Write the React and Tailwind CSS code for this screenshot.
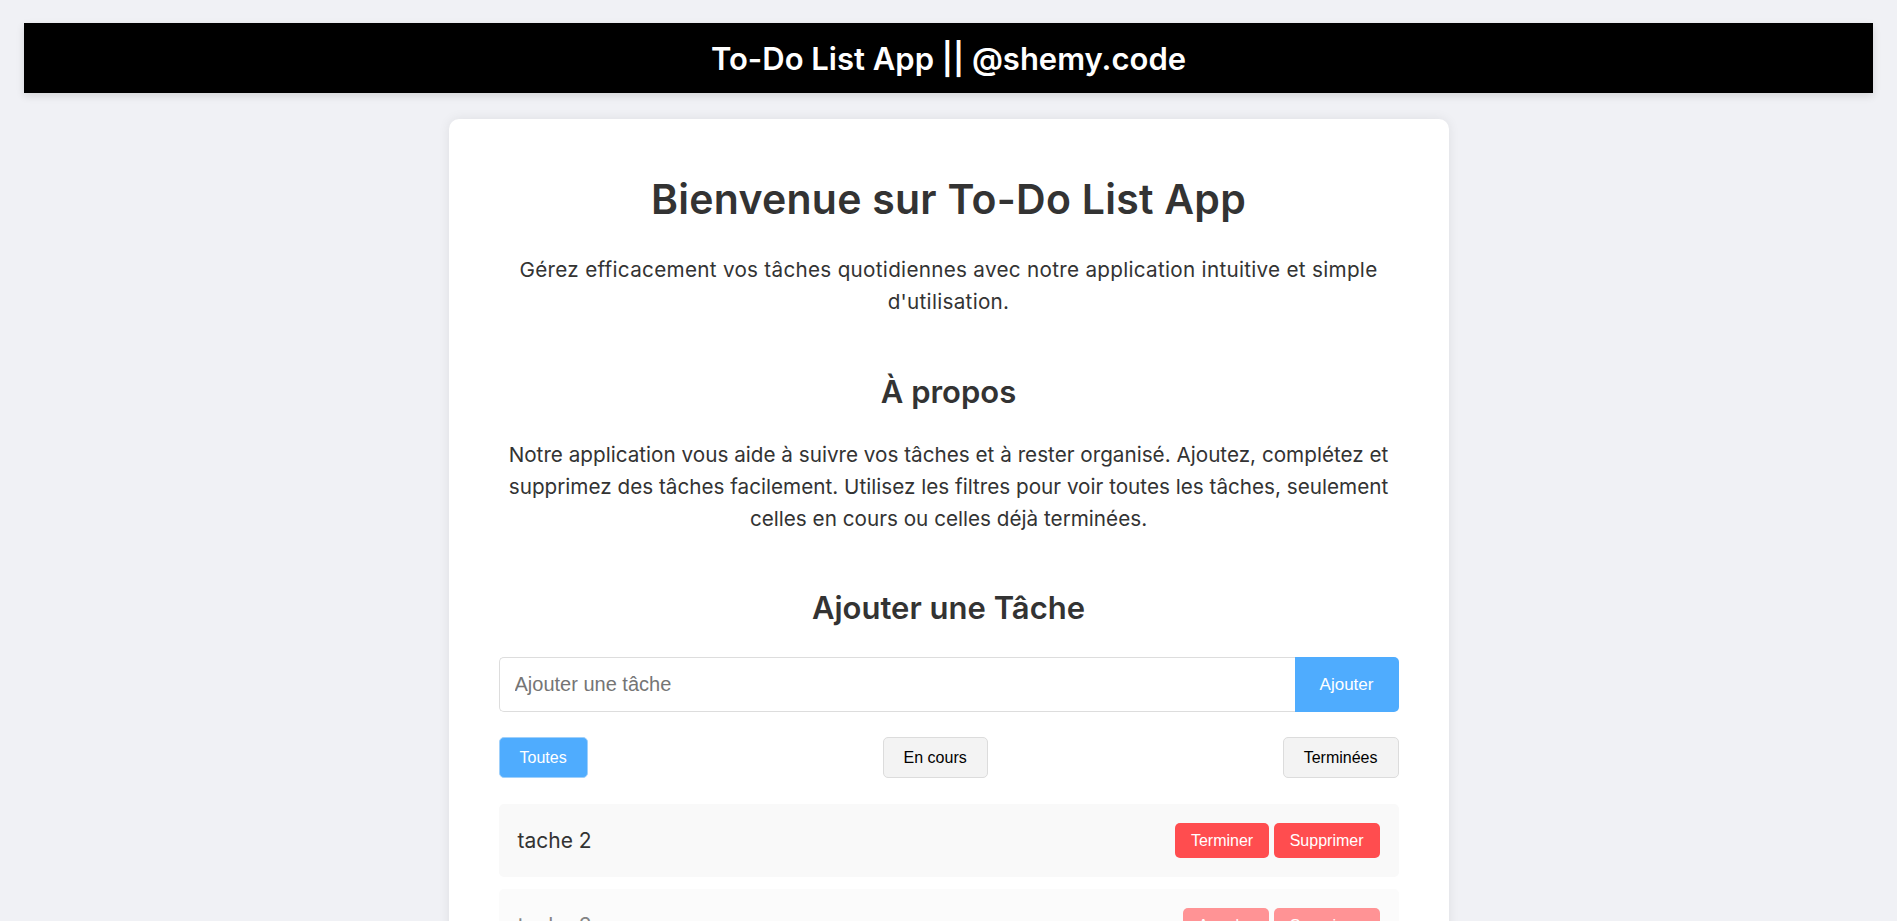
import React, { useState } from 'react'

const initialTasks = [
  { id: 2, text: 'tache 2', done: false },
  { id: 3, text: 'tache 3', done: true },
]

const filters = [
  { key: 'all', label: 'Toutes' },
  { key: 'active', label: 'En cours' },
  { key: 'done', label: 'Terminées' },
]

const TaskItem = ({ task, onToggle, onDelete }) => {
  return (
    <li
      className={`flex items-center justify-between h-[73px] px-[19px] rounded-[5px] bg-[#f9f9f9] ${
        task.done ? 'opacity-60' : ''
      }`}
    >
      <span className={`text-[21px] leading-[30px] text-[#333] ${task.done ? 'line-through' : ''}`}>
        {task.text}
      </span>
      <div className="flex gap-[5px] font-['Liberation_Sans',Arial,sans-serif]">
        <button
          onClick={() => onToggle(task.id)}
          className="h-[35px] px-[15.5px] rounded-[5px] bg-[#ff4d4f] text-white text-[16px]"
        >
          {task.done ? 'Annuler' : 'Terminer'}
        </button>
        <button
          onClick={() => onDelete(task.id)}
          className="h-[35px] px-[16px] rounded-[5px] bg-[#ff4d4f] text-white text-[16px]"
        >
          Supprimer
        </button>
      </div>
    </li>
  )
}

const App = () => {
  const [tasks, setTasks] = useState(initialTasks)
  const [input, setInput] = useState('')
  const [filter, setFilter] = useState('all')

  const addTask = () => {
    if (!input.trim()) return
    setTasks(prev => [...prev, { id: Date.now(), text: input.trim(), done: false }])
    setInput('')
  }

  const toggleTask = id => {
    setTasks(prev => prev.map(t => (t.id === id ? { ...t, done: !t.done } : t)))
  }

  const deleteTask = id => {
    setTasks(prev => prev.filter(t => t.id !== id))
  }

  const visibleTasks = tasks.filter(t => {
    if (filter === 'active') return !t.done
    if (filter === 'done') return t.done
    return true
  })

  return (
    <div className="min-h-screen bg-[#f0f1f5] font-[Inter,sans-serif] text-[#333] pt-[23px] pb-[40px]">
      {/* Header */}
      <header className="mx-[24px] h-[70px] bg-black flex items-center justify-center shadow-[0_3px_8px_rgba(0,0,0,0.12)]">
        <h1 className="text-white text-[31px] font-semibold leading-none">To-Do List App || @shemy.code</h1>
      </header>

      {/* Carte principale */}
      <main className="mx-auto mt-[26px] w-[1000px] bg-white rounded-[10px] shadow-[0_0_12px_rgba(0,0,0,0.08)] px-[50px] pt-[56px] pb-[50px]">
        <h2 className="text-center text-[41px] tracking-[0.25px] leading-[48px] font-semibold text-[#333]">
          Bienvenue sur To-Do List App
        </h2>
        <p className="mt-[31px] text-center text-[20.7px] tracking-[0.28px] leading-[32px] text-[#333]">
          Gérez efficacement vos tâches quotidiennes avec notre application intuitive et simple
          <br />
          d'utilisation.
        </p>

        <h3 className="mt-[54px] text-center text-[31px] leading-[40px] font-semibold text-[#333]">À propos</h3>
        <p className="mt-[27px] text-center text-[20.7px] leading-[32px] text-[#333]">
          Notre application vous aide à suivre vos tâches et à rester organisé. Ajoutez, complétez et
          <br />
          supprimez des tâches facilement. Utilisez les filtres pour voir toutes les tâches, seulement
          <br />
          celles en cours ou celles déjà terminées.
        </p>

        <h3 className="mt-[53px] text-center text-[31px] leading-[40px] font-semibold text-[#333]">
          Ajouter une Tâche
        </h3>

        <div className="mt-[29px] flex h-[55px] font-['Liberation_Sans',Arial,sans-serif]">
          <input
            value={input}
            onChange={e => setInput(e.target.value)}
            onKeyDown={e => e.key === 'Enter' && addTask()}
            placeholder="Ajouter une tâche"
            className="flex-1 min-w-0 h-full px-[15px] text-[20px] text-[#333] border border-[#ddd] border-r-0 rounded-l-[5px] outline-none placeholder:text-[#757575]"
          />
          <button
            onClick={addTask}
            className="w-[104px] h-full bg-[#4facfe] text-white text-[17px] rounded-r-[5px]"
          >
            Ajouter
          </button>
        </div>

        <div className="mt-[25px] flex justify-between font-['Liberation_Sans',Arial,sans-serif]">
          {filters.map(f => (
            <button
              key={f.key}
              onClick={() => setFilter(f.key)}
              className={`h-[41px] px-[20px] rounded-[5px] border text-[16px] ${
                filter === f.key
                  ? 'bg-[#4facfe] border-[#9fd0fb] text-white'
                  : 'bg-[#f3f3f3] border-[#dcdcdc] text-black'
              }`}
            >
              {f.label}
            </button>
          ))}
        </div>

        <ul className="mt-[26px] flex flex-col gap-[12px]">
          {visibleTasks.map(task => (
            <TaskItem key={task.id} task={task} onToggle={toggleTask} onDelete={deleteTask} />
          ))}
        </ul>
      </main>
    </div>
  )
}

export default App
